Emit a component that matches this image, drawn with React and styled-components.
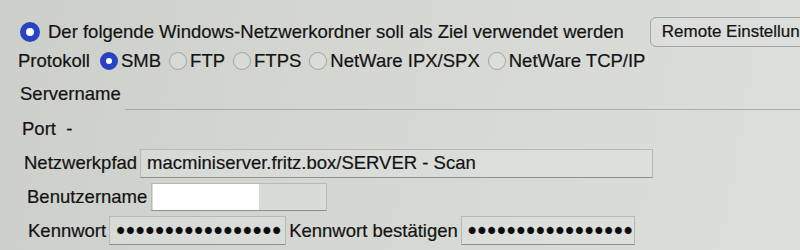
import React from "react";
import styled, { createGlobalStyle } from "styled-components";

const GlobalStyle = createGlobalStyle`
  html, body {
    margin: 0;
    padding: 0;
  }
  body {
    background: linear-gradient(100deg, #cdd0ca 0%, #d5d7d2 45%, #dcdeda 100%);
    font-family: "Liberation Sans", Arial, sans-serif;
    color: #131313;
    overflow: hidden;
  }
`;

const protocols = ["SMB", "FTP", "FTPS", "NetWare IPX/SPX", "NetWare TCP/IP"];

function App() {
  return (
    <>
      <GlobalStyle />
      <Page>
        <Row $height={30} $indent={20}>
          <Radio $checked />
          <MainLabel>Der folgende Windows-Netzwerkordner soll als Ziel verwendet werden</MainLabel>
          <Button>Remote Einstellung</Button>
        </Row>
        <Row $height={28} $indent={18}>
          <Label>Protokoll</Label>
          <Options>
            {protocols.map((p, i) => (
              <Option key={p}>
                <Radio $checked={i === 0} $small />
                <span>{p}</span>
              </Option>
            ))}
          </Options>
        </Row>
        <Row $height={38} $indent={20}>
          <Label>Servername</Label>
          <LineField />
        </Row>
        <Row $height={32} $indent={22}>
          <Label>Port&nbsp; -</Label>
        </Row>
        <Row $height={36} $indent={24} $gap={3}>
          <Label>Netzwerkpfad</Label>
          <Field $width={513}>macminiserver.fritz.box/SERVER - Scan</Field>
        </Row>
        <Row $height={31} $indent={27}>
          <Label>Benutzername</Label>
          <Field $width={176} $height={28}>
            <Redacted />
          </Field>
        </Row>
        <Row $height={37} $indent={28} $gap={3}>
          <Label>Kennwort</Label>
          <Field $width={177}>
            <Dots>{"\u2022".repeat(17)}</Dots>
          </Field>
          <Label>Kennwort bestätigen</Label>
          <Field $width={174}>
            <Dots>{"\u2022".repeat(17)}</Dots>
          </Field>
        </Row>
      </Page>
    </>
  );
}

export default App;

const Page = styled.div`
  width: 800px;
  height: 250px;
  display: flex;
  flex-direction: column;
  padding-top: 17px;
  box-sizing: border-box;
  font-size: 18.5px;
  -webkit-text-stroke: 0.2px #131313;
`;

const Row = styled.div`
  display: flex;
  align-items: center;
  gap: ${(p) => p.$gap ?? 4}px;
  height: ${(p) => p.$height}px;
  flex: none;
  padding-left: ${(p) => p.$indent}px;
  white-space: nowrap;
`;

const Radio = styled.span`
  flex: none;
  box-sizing: border-box;
  width: ${(p) => (p.$small ? 18 : 20)}px;
  height: ${(p) => (p.$small ? 18 : 20)}px;
  border-radius: 50%;
  border: ${(p) =>
    p.$checked ? `${p.$small ? 6 : 6.5}px solid #2743c4` : "1px solid #a4a6a2"};
  background: ${(p) => (p.$checked ? "#ffffff" : "rgba(255,255,255,0.15)")};
`;

const MainLabel = styled.span`
  margin-left: 4px;
`;

const Button = styled.div`
  margin-left: 22px;
  height: 28px;
  padding: 0 11px;
  display: flex;
  align-items: center;
  border: 1px solid #a3a5a1;
  border-radius: 6px;
  background: #dcdedb;
  font-size: 17px;
`;

const Label = styled.span`
  flex: none;
`;

const Options = styled.div`
  display: flex;
  align-items: center;
  gap: 8px;
  margin-left: 6px;
`;

const Option = styled.label`
  display: flex;
  align-items: center;
  gap: 3px;
`;

const LineField = styled.div`
  flex: 1;
  align-self: flex-end;
  margin-bottom: 3px;
  height: 1px;
  background: #a9aba7;
`;

const Field = styled.div`
  flex: none;
  box-sizing: border-box;
  width: ${(p) => p.$width}px;
  height: ${(p) => p.$height ?? 29}px;
  padding: 0 6px;
  display: flex;
  align-items: center;
  border: 1px solid #b7b9b5;
  border-bottom-color: #8e908c;
  background: rgba(225, 227, 223, 0.45);
  overflow: hidden;
`;

const Redacted = styled.div`
  width: 106px;
  height: 26px;
  margin-left: -5px;
  background: #ffffff;
`;

const Dots = styled.span`
  font-size: 25px;
  letter-spacing: 1px;
  line-height: 1;
  color: #0c0c0c;
`;
